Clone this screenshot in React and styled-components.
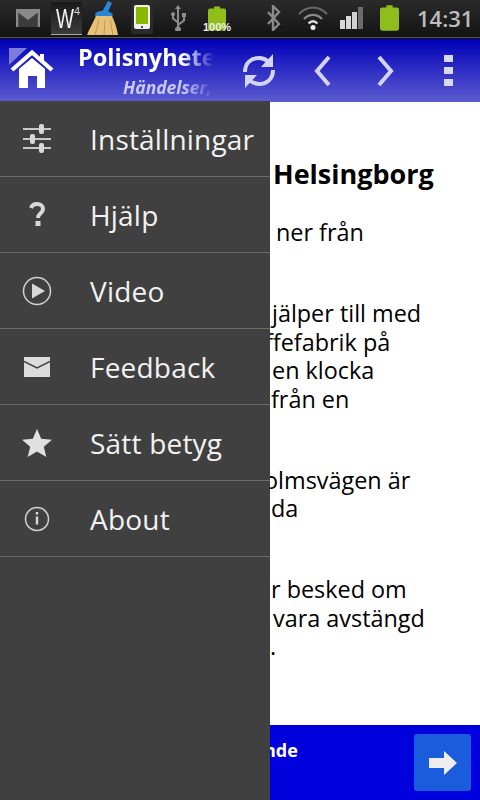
import React from 'react';
import styled, { createGlobalStyle } from 'styled-components';

const GlobalStyle = createGlobalStyle`
  html, body {
    margin: 0;
    padding: 0;
    background: #fff;
  }
  body {
    font-family: 'Open Sans', 'Noto Sans', sans-serif;
  }
`;

const Page = styled.div`
  position: relative;
  width: 480px;
  height: 800px;
  overflow: hidden;
  display: flex;
  flex-direction: column;
  background: #fff;
`;

const StatusBar = styled.div`
  height: 36px;
  flex: none;
  display: flex;
  align-items: center;
  background: linear-gradient(#2a2a2a, #141414);
  border-bottom: 1px solid #4c5c44;
  padding-bottom: 1px;
`;

const StatusGroup = styled.div`
  display: flex;
  align-items: center;
  height: 36px;
  margin-left: ${(p) => p.$left || 0}px;
`;

const StatusSlot = styled.div`
  width: ${(p) => p.$w}px;
  margin-left: ${(p) => p.$gap || 0}px;
  height: 36px;
  display: flex;
  align-items: center;
  justify-content: center;
  position: relative;
  flex: none;
`;

const Tile = styled.div`
  width: 31px;
  height: 33px;
  box-sizing: border-box;
  background: linear-gradient(#1a1a1a, #3a3a3a);
  border-bottom: 1px solid #aaa;
  position: relative;
`;

const TileLetter = styled.span`
  position: absolute;
  left: 5px;
  top: 2px;
  color: #f2f2f2;
  font-family: 'Liberation Sans', sans-serif;
  font-size: 28px;
  line-height: 30px;
  transform: scaleX(0.68);
  transform-origin: left center;
`;

const TileCount = styled.span`
  position: absolute;
  top: 3px;
  right: 2px;
  font-family: 'Liberation Sans', sans-serif;
  font-size: 11px;
  line-height: 12px;
  color: #ccc;
`;

const BatteryLabel = styled.span`
  position: absolute;
  left: -3px;
  right: -3px;
  bottom: 3px;
  text-align: center;
  font-family: 'Liberation Sans', sans-serif;
  font-size: 11px;
  font-weight: bold;
  line-height: 11px;
  color: #eee;
`;

const Clock = styled.div`
  margin-left: 18px;
  font-family: 'Open Sans', sans-serif;
  font-size: 22px;
  font-weight: 600;
  color: #bdbdbd;
`;

const Gap = styled.div`
  height: 1px;
  flex: none;
  background: #101010;
`;

const Header = styled.header`
  height: 63px;
  flex: none;
  display: flex;
  align-items: center;
  background: linear-gradient(#0000b8, #5c5cd0);
`;

const HomeButton = styled.div`
  width: 78px;
  height: 63px;
  flex: none;
`;

const TitleBlock = styled.div`
  width: 134px;
  height: 63px;
  flex: none;
  overflow: hidden;
  white-space: nowrap;
  mask-image: linear-gradient(to right, #000 78%, rgba(0, 0, 0, 0.08) 100%);
`;

const Title = styled.div`
  font-size: 23.5px;
  font-weight: 700;
  color: #fff;
  line-height: 30px;
  margin-top: 3px;
`;

const Subtitle = styled.div`
  font-size: 17.5px;
  font-weight: 700;
  font-style: italic;
  color: #c8c8f0;
  line-height: 22px;
  margin-top: 4px;
  padding-left: 45px;
`;

const ActionSlot = styled.div`
  width: ${(p) => p.$w}px;
  margin-left: ${(p) => p.$gap}px;
  height: 63px;
  flex: none;
  display: flex;
  align-items: center;
  justify-content: center;
`;

const Content = styled.main`
  flex: 1;
  padding: 57px 0 0 270px;
  color: #000;
  font-size: 23.4px;
  line-height: 28.5px;
  white-space: nowrap;
  overflow: hidden;
`;

const Heading = styled.h1`
  margin: 0 0 29px 3px;
  font-size: 27px;
  line-height: 30px;
  font-weight: 700;
`;

const Paragraph = styled.p`
  margin: 0 0 52.5px;
`;

// lines start under the drawer, so the offset can go negative
const Line = styled.span`
  display: block;
  margin-left: ${(p) => p.$indent || 0}px;
`;

const Footer = styled.footer`
  height: 75px;
  flex: none;
  box-sizing: border-box;
  display: flex;
  align-items: flex-start;
  justify-content: space-between;
  padding: 9px 9px 0 264px;
  background: #0000dc;
`;

const FooterText = styled.div`
  color: #fff;
  font-size: 18px;
  font-weight: 700;
  line-height: 32px;
`;

const NextButton = styled.div`
  width: 57px;
  height: 57px;
  border-radius: 3px;
  background: #1b5cdc;
  display: flex;
  align-items: center;
  justify-content: center;
`;

const Drawer = styled.nav`
  position: absolute;
  top: 101px;
  left: 0;
  bottom: 0;
  width: 270px;
  background: #404040;
`;

const MenuRow = styled.div`
  height: 76px;
  box-sizing: border-box;
  display: flex;
  align-items: center;
  border-bottom: 1px solid #6a6a6a;
`;

const MenuIcon = styled.div`
  width: 74px;
  height: 40px;
  flex: none;
  display: flex;
  align-items: center;
  justify-content: center;
`;

const MenuLabel = styled.div`
  margin-left: 16px;
  font-size: 28px;
  letter-spacing: 0.2px;
  color: #f2f2f2;
  white-space: nowrap;
`;

const SlidersIcon = () => (
  <svg width="30" height="30" viewBox="0 0 30 30">
    <path d="M1 5h28M1 15h28M1 24h28" stroke="#c8c8c8" strokeWidth="2" />
    <rect x="17" y="0" width="5" height="10" rx="2" fill="#d8d8d8" />
    <rect x="8" y="10" width="5" height="10" rx="2" fill="#d8d8d8" />
    <rect x="17" y="19" width="5" height="10" rx="2" fill="#d8d8d8" />
  </svg>
);

const HelpIcon = () => (
  <svg width="16" height="26" viewBox="0 0 16 26">
    <path d="M2 6c1-3 3-4 6-4 3.500 0 6 1.800 6 5 0 4.500-5 4-5 9" fill="none" stroke="#d8d8d8" strokeWidth="4" />
    <rect x="6.500" y="19" width="5" height="5" fill="#d8d8d8" />
  </svg>
);

const PlayIcon = () => (
  <svg width="30" height="30" viewBox="0 0 30 30">
    <circle cx="15" cy="15" r="13.500" fill="none" stroke="#d0d0d0" strokeWidth="1.500" />
    <path d="M10 7.500 23 15 10 22.500z" fill="#d8d8d8" />
  </svg>
);

const MailIcon = () => (
  <svg width="26" height="20" viewBox="0 0 26 20">
    <rect x="0" y="0" width="26" height="20" fill="#dcdcdc" />
    <path d="M0 4.500 13 11 26 4.500" fill="none" stroke="#404040" strokeWidth="1.500" />
  </svg>
);

const StarIcon = () => (
  <svg width="30" height="28" viewBox="0 0 30 28">
    <path d="M15 0l4.200 9.800 10.800 1-8.200 7 2.500 10.200L15 22.600 5.700 28l2.500-10.200L0 10.800l10.800-1z" fill="#e0e0e0" />
  </svg>
);

const InfoIcon = () => (
  <svg width="26" height="26" viewBox="0 0 26 26">
    <circle cx="13" cy="13" r="11.500" fill="none" stroke="#d0d0d0" strokeWidth="1.500" />
    <rect x="11.800" y="6" width="2.400" height="2.600" fill="#d8d8d8" />
    <path d="M13 10.500v8" fill="none" stroke="#d8d8d8" strokeWidth="2.400" />
  </svg>
);

const menu = [
  { label: 'Inställningar', icon: <SlidersIcon /> },
  { label: 'Hjälp', icon: <HelpIcon /> },
  { label: 'Video', icon: <PlayIcon /> },
  { label: 'Feedback', icon: <MailIcon /> },
  { label: 'Sätt betyg', icon: <StarIcon /> },
  { label: 'About', icon: <InfoIcon /> },
];

const HomeIcon = () => (
  <svg width="78" height="63" viewBox="0 0 78 63">
    <path d="M9 9h18L9 26z" fill="#7c7cdc" />
    <path d="M12 31 32 13.500 52 31" fill="none" stroke="#fff" strokeWidth="4" />
    <rect x="40" y="15" width="4" height="8" fill="#fff" />
    <path d="M19 30 32 19l13 11v19H37V37h-9v12h-9z" fill="#fff" />
  </svg>
);

const RefreshIcon = () => (
  <svg width="34" height="36" viewBox="0 0 34 36" fill="none">
    <path d="M3 19C3 10 9 5 17 5c4 0 7 1.500 10 4" stroke="#d4d4f4" strokeWidth="4" />
    <path d="M31 1v13H19z" fill="#d4d4f4" />
    <path d="M31 17c0 9-6 14-14 14-4 0-7-1.500-10-4" stroke="#d4d4f4" strokeWidth="4" />
    <path d="M3 35V22h12z" fill="#d4d4f4" />
  </svg>
);

const Chevron = ({ flip }) => (
  <svg width="18" height="32" viewBox="0 0 18 32" style={flip ? { transform: 'scaleX(-1)' } : undefined}>
    <path d="M15 2 3 16l12 14" fill="none" stroke="#d4d4f4" strokeWidth="4" />
  </svg>
);

const DotsIcon = () => (
  <svg width="9" height="31" viewBox="0 0 9 31">
    <path d="M0 0h9v7H0zM0 12h9v7H0zM0 24h9v7H0z" fill="#d8d8f6" />
  </svg>
);

const ArrowIcon = () => (
  <svg width="28" height="24" viewBox="0 0 28 24">
    <path d="M0 7h15V0l13 12-13 12v-7H0z" fill="#eeeeee" />
  </svg>
);

const GmailIcon = () => (
  <svg width="24" height="18" viewBox="0 0 24 18">
    <rect width="24" height="18" fill="#8a8a8a" />
    <path d="M2.500 18V4L12 11l9.500-7v14" fill="#3c3c3c" stroke="#3c3c3c" strokeWidth="0.500" />
    <path d="M1 1l11 8.500L23 1" fill="none" stroke="#8a8a8a" strokeWidth="2" />
  </svg>
);

const BroomIcon = () => (
  <svg width="34" height="36" viewBox="0 0 34 36">
    <path d="M22 1l4 2-5 11-5-2z" fill="#2a86d8" />
    <path d="M9 14c3-5 16-4 18 1l-3 3H10z" fill="#2a86d8" />
    <path d="M10 16h16c3 6 5 13 6 19H1c2-6 6-12 9-19z" fill="#e8c078" />
    <path d="M13 20l-4 15M19 20l-1 15M24 20l3 15" stroke="#c09850" strokeWidth="1" />
  </svg>
);

const PhoneIcon = () => (
  <svg width="22" height="32" viewBox="0 0 22 32">
    <rect width="22" height="32" rx="1" fill="#2a2a2a" />
    <rect x="3" y="3" width="16" height="24" rx="2" fill="#f0f0f0" />
    <rect x="5" y="5" width="12" height="17" fill="#8ab800" />
    <rect x="10" y="24" width="2" height="2" fill="#444" />
  </svg>
);

const UsbIcon = () => (
  <svg width="16" height="26" viewBox="0 0 16 26">
    <path d="M8 0l3 4H9v14l4-3v-3h-1V8h4v4h-1v4l-6 4.500v1a3 3 0 1 1-2 0V18l-5-4v-3a2 2 0 1 1 2 0v2l3 2.500V4H5z" fill="#8c8c8c" />
  </svg>
);

const BatteryIcon = ({ w, h }) => (
  <svg width={w} height={h} viewBox="0 0 18 24">
    <path d="M6 0h6v2h4a2 2 0 0 1 2 2v18a2 2 0 0 1-2 2H2a2 2 0 0 1-2-2V4a2 2 0 0 1 2-2h4z" fill="#8fbe1c" />
  </svg>
);

const BluetoothIcon = () => (
  <svg width="15" height="26" viewBox="0 0 15 26">
    <path d="M2 7l11 12-6 6V1l6 6L2 19" fill="none" stroke="#8a8a8a" strokeWidth="2.400" />
  </svg>
);

const WifiIcon = () => (
  <svg width="30" height="24" viewBox="0 0 30 24" fill="none">
    <path d="M1 8c8-8.500 20-8.500 28 0" stroke="#666" strokeWidth="2.400" />
    <path d="M6 13c5.500-5.500 12.500-5.500 18 0" stroke="#8a8a8a" strokeWidth="2.400" />
    <path d="M10.500 17.500c3-3 6-3 9 0" stroke="#dcdcdc" strokeWidth="2.400" />
    <circle cx="15" cy="21.500" r="2.500" fill="#eee" />
  </svg>
);

const SignalIcon = () => (
  <svg width="24" height="22" viewBox="0 0 24 22">
    <rect x="0" y="13" width="5" height="9" fill="#d8d8d8" />
    <rect x="6" y="9" width="5" height="13" fill="#d8d8d8" />
    <rect x="12" y="5" width="5" height="17" fill="#d0d0d0" />
    <rect x="18" y="0" width="5" height="22" fill="#6c6c6c" />
  </svg>
);

const App = () => (
  <Page>
    <GlobalStyle />
    <StatusBar>
      <StatusGroup $left={16}>
        <StatusSlot $w={24}><GmailIcon /></StatusSlot>
        <StatusSlot $w={31} $gap={11}>
          <Tile><TileLetter>W</TileLetter><TileCount>4</TileCount></Tile>
        </StatusSlot>
        <StatusSlot $w={34} $gap={4}><BroomIcon /></StatusSlot>
        <StatusSlot $w={22} $gap={11}><PhoneIcon /></StatusSlot>
        <StatusSlot $w={16} $gap={17}><UsbIcon /></StatusSlot>
        <StatusSlot $w={22} $gap={20}>
          <BatteryIcon w={18} h={27} />
          <BatteryLabel>100%</BatteryLabel>
        </StatusSlot>
      </StatusGroup>
      <StatusGroup $left={38}>
        <StatusSlot $w={15}><BluetoothIcon /></StatusSlot>
        <StatusSlot $w={30} $gap={17}><WifiIcon /></StatusSlot>
        <StatusSlot $w={24} $gap={12}><SignalIcon /></StatusSlot>
        <StatusSlot $w={20} $gap={15}><BatteryIcon w={19} h={26} /></StatusSlot>
        <Clock>14:31</Clock>
      </StatusGroup>
    </StatusBar>
    <Gap />
    <Header>
      <HomeButton><HomeIcon /></HomeButton>
      <TitleBlock>
        <Title>Polisnyheter</Title>
        <Subtitle>Händelser,</Subtitle>
      </TitleBlock>
      <ActionSlot $w={34} $gap={30}><RefreshIcon /></ActionSlot>
      <ActionSlot $w={18} $gap={38}><Chevron /></ActionSlot>
      <ActionSlot $w={18} $gap={44}><Chevron flip /></ActionSlot>
      <ActionSlot $w={9} $gap={50}><DotsIcon /></ActionSlot>
    </Header>
    <Content>
      <Heading>Helsingborg</Heading>
      <Paragraph>
        <Line $indent={6}>ner från</Line>
      </Paragraph>
      <Paragraph>
        <Line $indent={2}>jälper till med</Line>
        <Line $indent={-5}>ffefabrik på</Line>
        <Line $indent={2}>en klocka</Line>
        <Line $indent={1}>från en</Line>
      </Paragraph>
      <Paragraph>
        <Line $indent={-6}>olmsvägen är</Line>
        <Line $indent={1}>da</Line>
      </Paragraph>
      <Paragraph>
        <Line $indent={1}>r besked om</Line>
        <Line $indent={3}>vara avstängd</Line>
        <Line>.</Line>
      </Paragraph>
    </Content>
    <Footer>
      <FooterText>nde</FooterText>
      <NextButton><ArrowIcon /></NextButton>
    </Footer>
    <Drawer>
      {menu.map((item) => (
        <MenuRow key={item.label}>
          <MenuIcon>{item.icon}</MenuIcon>
          <MenuLabel>{item.label}</MenuLabel>
        </MenuRow>
      ))}
    </Drawer>
  </Page>
);

export default App;
